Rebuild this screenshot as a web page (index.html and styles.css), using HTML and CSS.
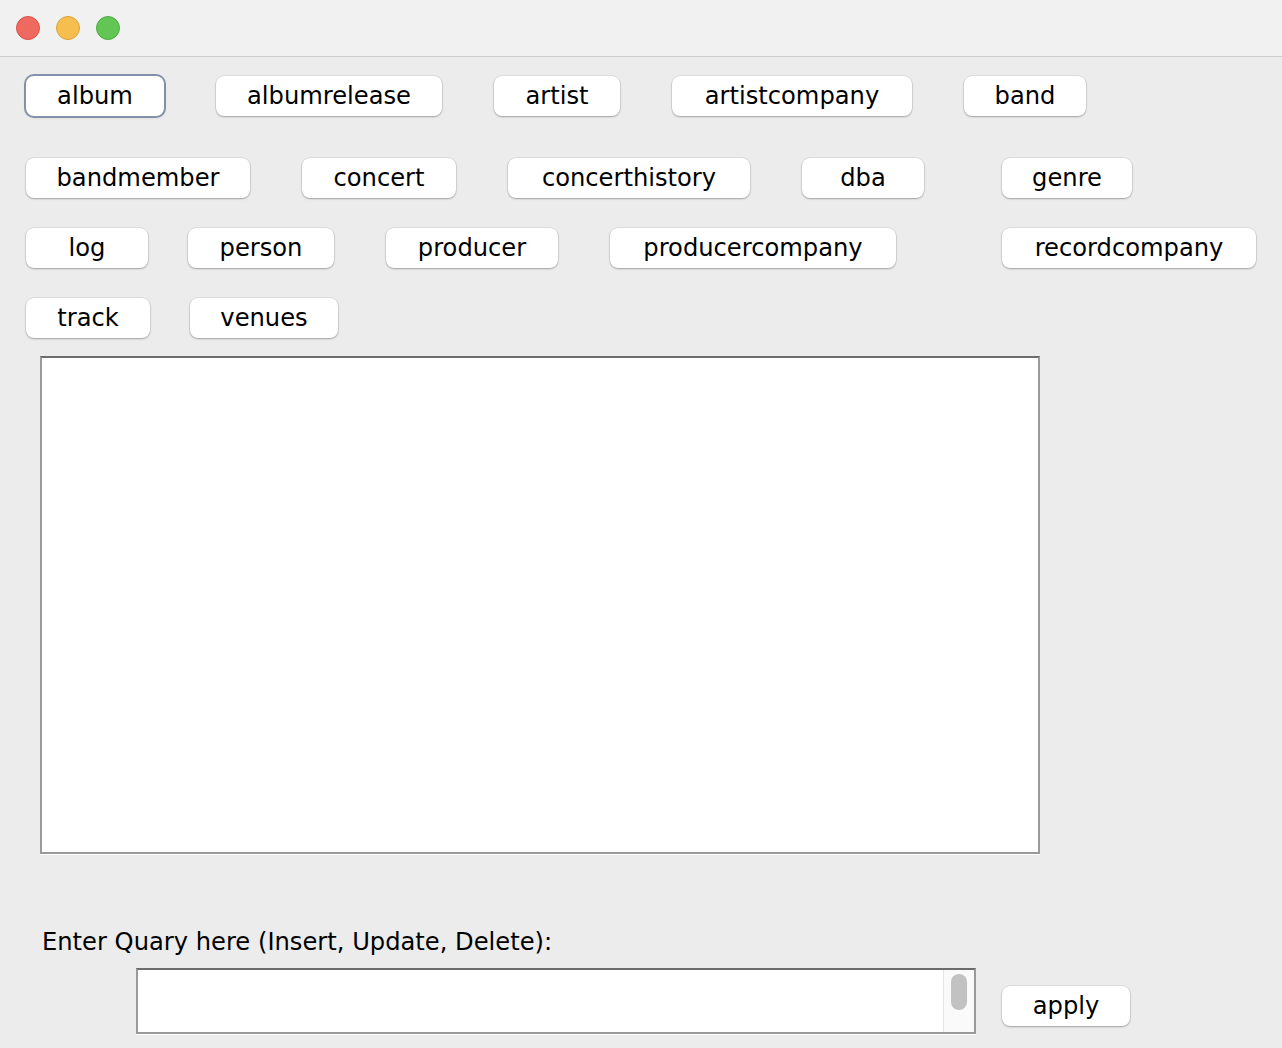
FILE: index.html
```html
<!DOCTYPE html>
<html>
<head>
<meta charset="utf-8">
<link rel="stylesheet" href="styles.css">
</head>
<body>
<div class="window">
  <div class="titlebar">
    <span class="light red"></span>
    <span class="light yellow"></span>
    <span class="light green"></span>
  </div>
  <div class="content">
    <div class="row row1">
      <button class="btn focused w-album">album</button>
      <button class="btn w-albumrelease">albumrelease</button>
      <button class="btn w-artist">artist</button>
      <button class="btn w-artistcompany">artistcompany</button>
      <button class="btn w-band">band</button>
    </div>
    <div class="row row2">
      <button class="btn w-bandmember">bandmember</button>
      <button class="btn w-concert">concert</button>
      <button class="btn w-concerthistory">concerthistory</button>
      <button class="btn w-dba">dba</button>
      <button class="btn w-genre">genre</button>
    </div>
    <div class="row row3">
      <button class="btn w-log">log</button>
      <button class="btn w-person">person</button>
      <button class="btn w-producer">producer</button>
      <button class="btn w-producercompany">producercompany</button>
      <button class="btn w-recordcompany">recordcompany</button>
    </div>
    <div class="row row4">
      <button class="btn w-track">track</button>
      <button class="btn w-venues">venues</button>
    </div>
    <div class="output"></div>
    <div class="label">Enter Quary here (Insert, Update, Delete):</div>
    <div class="query-row">
      <div class="query">
        <div class="query-text"></div>
        <div class="scrollbar"><div class="thumb"></div></div>
      </div>
      <button class="btn apply">apply</button>
    </div>
  </div>
</div>
</body>
</html>
```
FILE: styles.css
```css
html, body {
  margin: 0;
  padding: 0;
  background: #ececec;
}
body {
  font-family: "DejaVu Sans", "Liberation Sans", sans-serif;
  color: #000;
}
.window {
  width: 1282px;
  height: 1048px;
  background: #ececec;
  overflow: hidden;
}
.titlebar {
  height: 56px;
  background: #f1f1f1;
  border-bottom: 1px solid #cfcfcf;
  display: flex;
  align-items: center;
  padding-left: 16px;
  gap: 16px;
  box-sizing: content-box;
}
.light {
  width: 24px;
  height: 24px;
  border-radius: 50%;
  box-sizing: border-box;
}
.red { background: #ee6a5f; border: 1px solid #d9534a; }
.yellow { background: #f5be4f; border: 1px solid #dca136; }
.green { background: #62c554; border: 1px solid #4ead42; }

.content {
  padding-left: 26px;
}
.row {
  display: flex;
  height: 40px;
  gap: 52px;
}
.row1 { margin-top: 19px; }
.row2 { margin-top: 42px; }
.row3 { margin-top: 30px; }
.row4 { margin-top: 30px; }

.btn {
  height: 40px;
  padding: 0;
  border: none;
  background: #fff;
  border-radius: 8px;
  box-shadow: 0 0 0 0.5px rgba(0,0,0,0.12), 0 1px 2px rgba(0,0,0,0.28);
  font-family: "DejaVu Sans", "Liberation Sans", sans-serif;
  font-size: 24.2px;
  line-height: 40px;
  color: #000;
  text-align: center;
  flex: none;
}
.btn.focused {
  box-shadow: 0 0 0 2px #8391a8, 0 1px 3px rgba(0,0,0,0.3);
}
.w-album { width: 138px; }
.w-albumrelease { width: 226px; }
.w-artist { width: 126px; }
.w-artistcompany { width: 240px; }
.w-band { width: 122px; }
.w-bandmember { width: 224px; }
.w-concert { width: 154px; }
.w-concerthistory { width: 242px; }
.w-dba { width: 122px; }
.w-genre { width: 130px; margin-left: 26px; }
.w-log { width: 122px; }
.w-person { width: 146px; margin-left: -12px; }
.w-producer { width: 172px; }
.w-producercompany { width: 286px; }
.w-recordcompany { width: 254px; margin-left: 54px; }
.w-track { width: 124px; }
.w-venues { width: 148px; margin-left: -12px; }

.output {
  margin-top: 18px;
  margin-left: 14px;
  width: 1000px;
  height: 498px;
  box-sizing: border-box;
  background: #fff;
  border: 2px solid #9a9a9a;
  border-top-color: #6c6c6c;
  box-shadow: 0 1px 0 #fff;
}
.label {
  margin-top: 74px;
  margin-left: 16px;
  height: 28px;
  line-height: 28px;
  font-size: 24.2px;
}
.query-row {
  display: flex;
  align-items: flex-start;
  margin-top: 12px;
}
.query {
  margin-left: 110px;
  width: 840px;
  height: 66px;
  box-sizing: border-box;
  background: #fff;
  border: 2px solid #9a9a9a;
  border-top-color: #6c6c6c;
  box-shadow: 0 1px 0 #fff;
  display: flex;
}
.query-text {
  flex: 1;
}
.scrollbar {
  width: 31px;
  border-left: 1px solid #e4e4e4;
  background: #fafafa;
  display: flex;
  justify-content: center;
  padding-top: 4px;
  box-sizing: border-box;
}
.thumb {
  width: 16px;
  height: 36px;
  border-radius: 8px;
  background: #c2c2c2;
}
.btn.apply {
  width: 128px;
  margin-left: 26px;
  margin-top: 18px;
}
```
